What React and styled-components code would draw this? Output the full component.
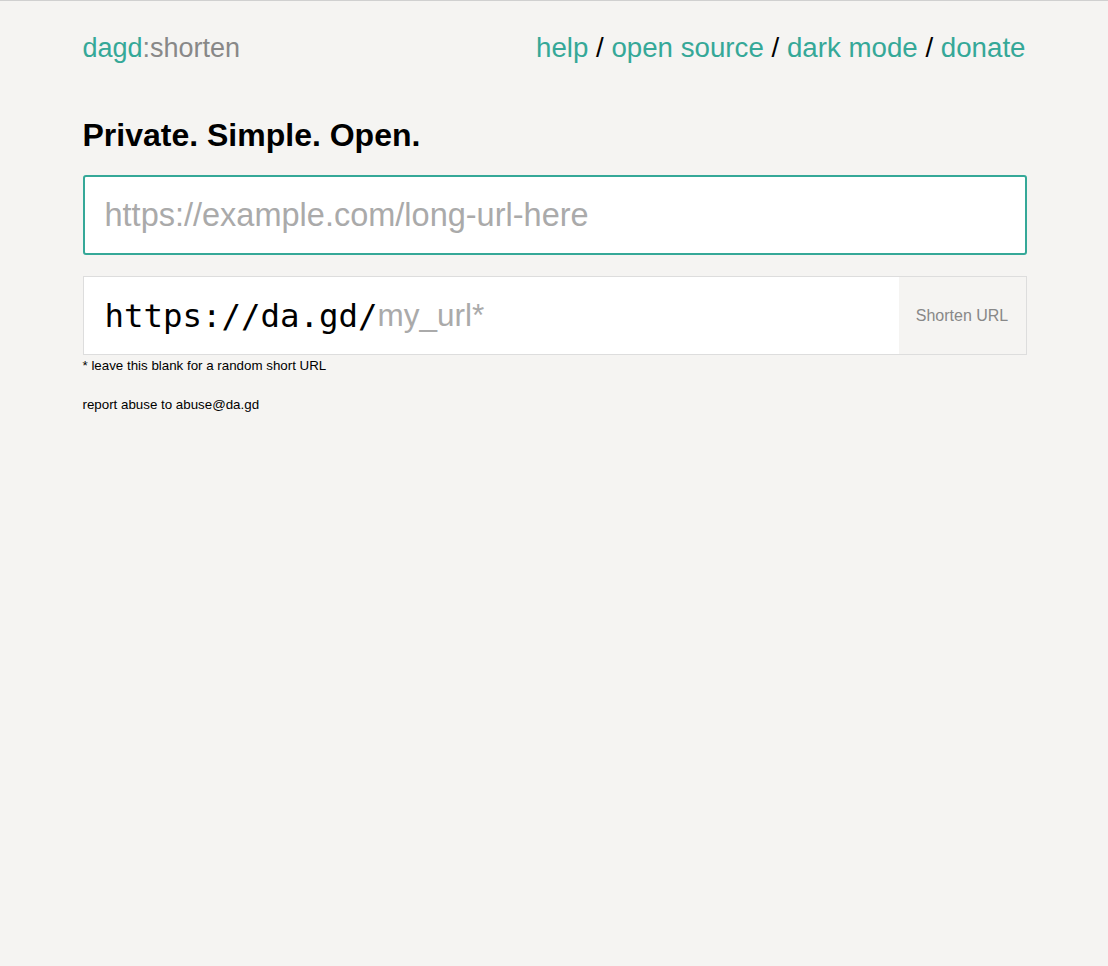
import React from 'react';
import styled, { createGlobalStyle } from 'styled-components';

const teal = '#35a898';

const GlobalStyle = createGlobalStyle`
  html, body {
    margin: 0;
    padding: 0;
    background: #f5f4f2;
  }
  body {
    font-family: "Liberation Sans", Arial, sans-serif;
    border-top: 1px solid #d0d0d0;
    min-height: 965px;
  }
`;

const Page = styled.div`
  width: 944px;
  margin: 0 auto;
  padding: 31px 0 0 1px;
`;

const Header = styled.header`
  display: flex;
  justify-content: space-between;
  align-items: baseline;
  font-size: 27px;
  line-height: 32px;
`;

const Brand = styled.div`
  color: #888;
`;

const BrandName = styled.span`
  color: ${teal};
`;

const Nav = styled.nav`
  color: #000;
  font-size: 27.7px;
  padding-right: 1px;
`;

const NavLink = styled.a`
  color: ${teal};
  text-decoration: none;
`;

const Title = styled.h1`
  font-size: 32px;
  font-weight: bold;
  margin: 53px 0 22px;
  line-height: 36px;
  color: #000;
`;

const LongInput = styled.input`
  display: block;
  box-sizing: border-box;
  width: 100%;
  height: 80px;
  border: 2px solid ${teal};
  border-radius: 3px;
  background: #fff;
  padding: 0 20px;
  font-family: "Liberation Sans", Arial, sans-serif;
  font-size: 32.5px;
  outline: none;
  &::placeholder {
    color: #aaa;
  }
`;

const ShortRow = styled.div`
  display: flex;
  margin-top: 21px;
  height: 79px;
  box-sizing: border-box;
  border: 1px solid #ddd;
  background: #fff;
`;

const Prefix = styled.span`
  display: flex;
  align-items: center;
  padding-left: 21px;
  font-family: "DejaVu Sans Mono", monospace;
  font-size: 32.4px;
  color: #000;
`;

const SlugInput = styled.input`
  flex: 1;
  min-width: 0;
  border: none;
  outline: none;
  padding: 0;
  background: transparent;
  font-family: "Liberation Sans", Arial, sans-serif;
  font-size: 31.5px;
  &::placeholder {
    color: #aaa;
  }
`;

const ShortenButton = styled.button`
  width: 127px;
  border: none;
  background: #f5f4f2;
  color: #888;
  font-family: "Liberation Sans", Arial, sans-serif;
  font-size: 16px;
  cursor: pointer;
`;

const Note = styled.p`
  margin: ${(p) => p.$top}px 0 0;
  font-size: 13.33px;
  line-height: 16px;
  color: #000;
`;

export default function App() {
  return (
    <>
      <GlobalStyle />
      <Page>
        <Header>
          <Brand>
            <BrandName>dagd</BrandName>:shorten
          </Brand>
          <Nav>
            <NavLink href="#">help</NavLink> / <NavLink href="#">open source</NavLink> /{' '}
            <NavLink href="#">dark mode</NavLink> / <NavLink href="#">donate</NavLink>
          </Nav>
        </Header>
        <Title>Private. Simple. Open.</Title>
        <LongInput placeholder="https://example.com/long-url-here" />
        <ShortRow>
          <Prefix>https://da.gd/</Prefix>
          <SlugInput placeholder="my_url*" />
          <ShortenButton>Shorten URL</ShortenButton>
        </ShortRow>
        <Note $top={3}>* leave this blank for a random short URL</Note>
        <Note $top={23}>report abuse to abuse@da.gd</Note>
      </Page>
    </>
  );
}
